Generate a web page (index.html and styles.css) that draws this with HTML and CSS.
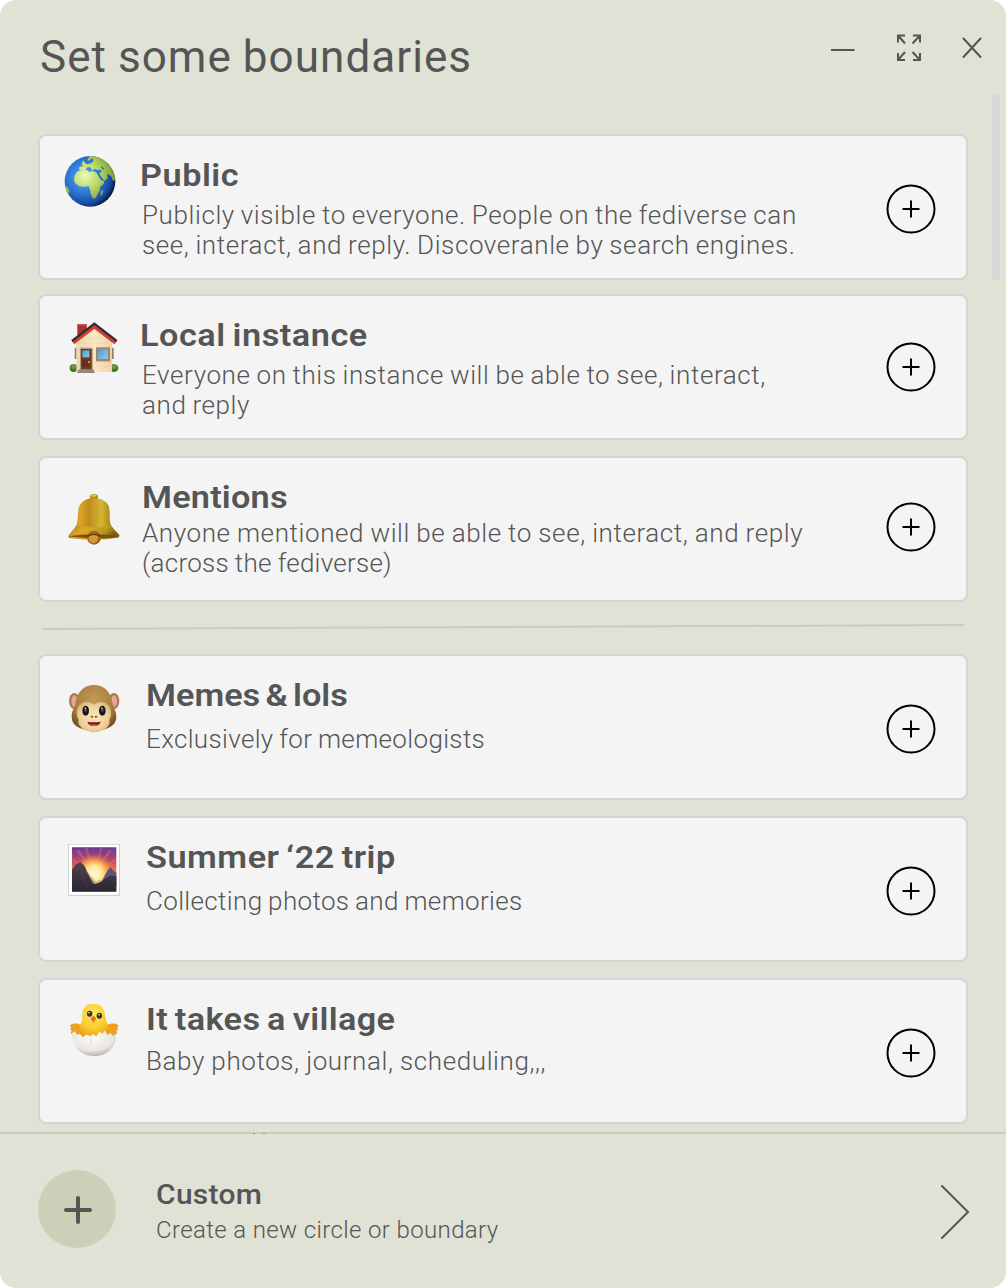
FILE: index.html
```html
<!DOCTYPE html>
<html lang="en">
<head>
<meta charset="utf-8">
<title>Set some boundaries</title>
<link rel="stylesheet" href="styles.css">
</head>
<body>
<svg class="defs" width="0" height="0" aria-hidden="true">
  <symbol id="add" viewBox="0 0 50 50"><circle cx="25" cy="25" r="23.5"/><path d="M25 16.5v17M16.5 25h17"/></symbol>
</svg>
<main class="window">
  <header class="header">
    <h1 class="title">Set some boundaries</h1>
    <div class="controls">
      <svg width="24" height="28" viewBox="0 0 24 28"><path d="M0 16h23.5"/></svg>
      <svg width="26" height="28" viewBox="0 0 26 28"><path d="M9 1.500H2v7M2 1.500l7 8M17 1.500h7v7M24 1.500l-7.500 8M2 19v7h7M2 26l7-8M24 19v7h-7M24 26l-7.500-8"/></svg>
      <svg width="20" height="28" viewBox="0 0 20 28"><path d="M1.500 4.500l17 18.500M18.500 4.500l-17 18.500" stroke-linecap="round"/></svg>
    </div>
  </header>
  <div class="scrollbar"></div>
  <section class="list">
    <article class="card card-public">
      <svg class="emoji" viewBox="102 93 156 156">
        <defs>
          <radialGradient id="sea" cx=".38" cy=".42" r=".64"><stop offset="0" stop-color="#62aef2"/><stop offset=".5" stop-color="#2e77d6"/><stop offset=".82" stop-color="#174ba4"/><stop offset="1" stop-color="#061a3c"/></radialGradient>
          <radialGradient id="land" gradientUnits="userSpaceOnUse" cx="165" cy="152" r="95"><stop offset="0" stop-color="#ecfbb4"/><stop offset=".45" stop-color="#b9d869"/><stop offset="1" stop-color="#6d922c"/></radialGradient>
          <clipPath id="globe"><circle cx="180" cy="169" r="76"/></clipPath>
        </defs>
        <circle cx="180" cy="169" r="76" fill="url(#sea)"/>
        <g fill="url(#land)" clip-path="url(#globe)">
          <path d="M133 153l8-12 10-5 20-1 6 5 14-1 10 5 7 13 6 9 9 2-2 8-11 11-1 10-6 10-6 12-8 2-6-12-3-15-4-11-13 2-14-1-12-8-5-9z"/>
          <path d="M148 135l0-10 11-2-5-7 10-4 6 6 13-3 7-8-4-7-9 7-5-2 7-12 11-4 15 2 20 9 18 18 13 24 3 22-10 4-6-15-8-5-5 2 4 9-10 8-9-8-7-14 7-6-2-5-10 1-9-4-4 3-3 4-4-9-5-3-8 2-4 7z"/>
          <path d="M157 108l5-1 1 10-6 3zM213 199l7-5-3 13-6 6zM103 181l9 4 7 14-6 12-8-9z"/>
        </g>
        <path d="M202 143l15 22M214 125l8 9" stroke="#246bb5" stroke-width="4"/>
      </svg>
      <div class="text"><h2>Public</h2><p>Publicly visible to everyone. People on the fediverse can<br>see, interact, and reply. Discoveranle by search engines.</p></div>
      <svg class="add"><use href="#add"/></svg>
    </article>
    <article class="card card-local">
      <svg class="emoji" viewBox="54 36 156 156">
        <defs>
          <linearGradient id="wall"><stop offset="0" stop-color="#eed6ac"/><stop offset=".5" stop-color="#fbe7c3"/><stop offset="1" stop-color="#efd4a7"/></linearGradient>
          <linearGradient id="glass" x2="1" y2="1"><stop offset="0" stop-color="#4d9fd7"/><stop offset="1" stop-color="#94c7e9"/></linearGradient>
          <radialGradient id="bush" cy=".3"><stop offset="0" stop-color="#7eaa42"/><stop offset="1" stop-color="#3e721e"/></radialGradient>
        </defs>
        <path d="M82 42h28v34l-28 18z" fill="#aa302b"/><path d="M82 42h28v5H82z" fill="#ca5048"/>
        <path d="M74 113h6v34h-6zM185 113h6v34h-6z" fill="#8c8174"/>
        <ellipse cx="71" cy="174" rx="12" ry="12" fill="url(#bush)"/><ellipse cx="192" cy="174" rx="13" ry="12" fill="url(#bush)"/>
        <path d="M79 94l54-42 53 42v92H79z" fill="url(#wall)"/>
        <path d="M80 121h106M80 133h106M80 145h106M80 157h106M80 169h106M92 99h82M106 85h52" stroke="#dfc59a" stroke-width="1"/>
        <path d="M69 98l64-49 64 49" fill="none" stroke="#d33b35" stroke-width="12"/>
        <path d="M66 93l67-52 67 52" fill="none" stroke="#2f3033" stroke-width="7"/>
        <path d="M90 113h38v67H90z" fill="#b29a7d"/><path d="M93 117h32v62H93z" fill="#74381f"/>
        <path d="M97 121h21v21H97z" fill="url(#glass)"/><path d="M98 150h7v21h-7zM109 150h7v21h-7z" fill="#602b18"/><circle cx="117" cy="156" r="3" fill="#eab24b"/>
        <path d="M138 112h42v42h-42z" fill="#a08569"/><path d="M143 118h31v29h-31z" fill="url(#glass)"/>
        <path d="M87 178h43l5 11H81z" fill="#928880"/>
      </svg>
      <div class="text"><h2>Local instance</h2><p>Everyone on this instance will be able to see, interact,<br>and reply</p></div>
      <svg class="add"><use href="#add"/></svg>
    </article>
    <article class="card card-mentions">
      <svg class="emoji" viewBox="54 42 156 156">
        <defs>
          <linearGradient id="brass"><stop offset="0" stop-color="#8b5b0c"/><stop offset=".22" stop-color="#dea426"/><stop offset=".4" stop-color="#c08c1a"/><stop offset=".65" stop-color="#d3b733"/><stop offset=".83" stop-color="#a98416"/><stop offset="1" stop-color="#79500c"/></linearGradient>
          <linearGradient id="brassRim" x2="1" y2=".3"><stop offset="0" stop-color="#ba8111"/><stop offset=".35" stop-color="#e0a62b"/><stop offset=".75" stop-color="#bc9c22"/><stop offset="1" stop-color="#7c5b12"/></linearGradient>
        </defs>
        <rect x="120" y="43" width="24" height="20" rx="8" fill="#b8891e"/><ellipse cx="131" cy="47" rx="8" ry="3" fill="#e7c84d"/>
        <path d="M55 168c8-13 20-21 26-36 5-19-1-49 13-63 10-11 24-14 38-14s29 4 39 15c13 15 5 42 10 60 5 16 19 24 28 37q-2 5-7 6-70 12-142 1-5-1-5-6z" fill="url(#brass)"/>
        <path d="M56 167c8-12 17-18 24-31q52 13 101 0 13 20 27 31-7 5-18 6-59 9-120 0-10-1-14-6z" fill="url(#brassRim)"/>
        <path d="M61 168q70-10 142 0-13 5-71 6-62-1-71-6z" fill="#765009"/>
        <circle cx="132" cy="173" r="21" fill="#9d6914"/><circle cx="130" cy="175" r="14" fill="#d49839"/><path d="M112 169q20-12 40 0" stroke="#5d3a08" stroke-width="4" fill="none"/>
      </svg>
      <div class="text"><h2>Mentions</h2><p>Anyone mentioned will be able to see, interact, and reply<br><span class="across">(across the fediverse)</span></p></div>
      <svg class="add"><use href="#add"/></svg>
    </article>
    <svg class="divider" viewBox="0 0 930 52"><path d="M4 27l922-4"/></svg>
    <article class="card card-memes">
      <svg class="emoji" viewBox="54 39 156 156">
        <defs>
          <radialGradient id="fur" cx=".5" cy=".3" r=".65"><stop offset="0" stop-color="#c39a59"/><stop offset=".7" stop-color="#a77c40"/><stop offset="1" stop-color="#795426"/></radialGradient>
          <radialGradient id="face" cx=".5" cy=".5" r=".6"><stop offset="0" stop-color="#fbe6bb"/><stop offset=".7" stop-color="#edcf96"/><stop offset="1" stop-color="#cfaa69"/></radialGradient>
        </defs>
        <ellipse cx="73" cy="93" rx="16" ry="24" fill="#a97f46"/><ellipse cx="192" cy="93" rx="16" ry="24" fill="#a97f46"/>
        <ellipse cx="73" cy="93" rx="9" ry="17" fill="#e9a3a0"/><ellipse cx="192" cy="93" rx="9" ry="17" fill="#e9a3a0"/>
        <path d="M132 45c31 0 51 22 55 52 2 17 12 24 12 43 0 28-27 37-46 39q-12 7-21 8-9-1-21-8c-20-2-46-11-46-39 0-19 10-26 12-43 4-30 24-52 55-52z" fill="url(#fur)"/>
        <path d="M132 105c12-13 32-12 42-1 12 13 11 34 4 45 5 18-14 32-30 35q-16 5-32 0c-16-4-35-17-30-35-8-13-8-34 4-46 11-10 30-11 42 2z" fill="url(#face)"/>
        <ellipse cx="107" cy="122" rx="10" ry="15" fill="#171717"/><ellipse cx="157" cy="122" rx="10" ry="15" fill="#171717"/>
        <ellipse cx="107" cy="121" rx="4" ry="5" fill="#4b4d4f"/><ellipse cx="157" cy="121" rx="4" ry="5" fill="#4b4d4f"/><circle cx="106" cy="115" r="2.500" fill="#fff"/><circle cx="156" cy="115" r="2.500" fill="#fff"/>
        <ellipse cx="126" cy="140" rx="4" ry="3" fill="#80562d"/><ellipse cx="138" cy="140" rx="4" ry="3" fill="#80562d"/>
        <path d="M112 155q20 4 40 0-4 13-20 13t-20-13z" fill="#7c1826"/><path d="M120 164q12-3 24 0-5 4-12 4t-12-4z" fill="#df5267"/>
      </svg>
      <div class="text"><h2>Memes &amp; lols</h2><p>Exclusively for memeologists</p></div>
      <svg class="add"><use href="#add"/></svg>
    </article>
    <article class="card card-trip">
      <svg class="emoji" viewBox="54 42 156 156">
        <defs>
          <linearGradient id="sky" x2="0" y2="1"><stop offset="0" stop-color="#653b91"/><stop offset=".28" stop-color="#b84372"/><stop offset=".5" stop-color="#ef7240"/><stop offset="1" stop-color="#fbbd58"/></linearGradient>
          <radialGradient id="sun" gradientUnits="userSpaceOnUse" cx="132" cy="132" r="62"><stop offset="0" stop-color="#fffbd4"/><stop offset=".4" stop-color="#ffe99a"/><stop offset=".65" stop-color="#ffb24a" stop-opacity=".85"/><stop offset="1" stop-color="#f6733c" stop-opacity="0"/></radialGradient>
          <linearGradient id="rock" x2="0" y2="1"><stop offset="0" stop-color="#55424c"/><stop offset="1" stop-color="#282633"/></linearGradient>
        </defs>
        <path d="M54 42h156v156H54z" fill="#c8d2d4"/><path d="M57 44h150v150H57z" fill="#fff"/>
        <path d="M66 52h133v133H66z" fill="url(#sky)"/>
        <path d="M132 132L78 62l10-2zM132 132L105 53l8 0zM132 132l19-79 7 0zM132 132l45-73 9 3zM132 132L67 91v-8zM132 132l66-48v8z" fill="#ff9a58" opacity=".28"/>
        <path d="M66 65h133v120H66z" fill="url(#sun)"/>
        <path d="M158 148l9-17 6-10 8-10 10 11 8 6v40h-41z" fill="#57577a"/>
        <path d="M66 119l12-16 13-7 12 11 8 17 13 23 10 14 16-4 16-12 15-8 18 2v46H66z" fill="url(#rock)"/>
        <path d="M105 118l17 19 16 17 18-6 12-10-14 17-14 7-12-1z" fill="#b79878" opacity=".55"/><path d="M78 127l10-20 9 30 18 40" fill="none" stroke="#655258" stroke-width="3" opacity=".3"/>
      </svg>
      <div class="text"><h2>Summer ‘22 trip</h2><p>Collecting photos and memories</p></div>
      <svg class="add"><use href="#add"/></svg>
    </article>
    <article class="card card-village">
      <svg class="emoji" viewBox="54 42 156 156">
        <defs>
          <radialGradient id="chick" cx=".5" cy=".3" r=".75"><stop offset="0" stop-color="#ffe661"/><stop offset=".6" stop-color="#fbcb2e"/><stop offset="1" stop-color="#e99a15"/></radialGradient>
          <radialGradient id="shell" cx=".45" cy=".3" r=".75"><stop offset="0" stop-color="#fcfbf8"/><stop offset=".65" stop-color="#e9e6df"/><stop offset="1" stop-color="#aaa69d"/></radialGradient>
        </defs>
        <path d="M68 127l5-10 116 0 6 12-8 20H76z" fill="#b8985d"/>
        <path d="M96 107c-14-9-28-7-36-1q3 4 3 8l-3 5 5 2-3 10 34 5zM168 107c14-9 29-7 38-1q-4 4-4 8l3 5-6 2 3 10-34 5z" fill="#eea01e"/>
        <path d="M97 74c1-23 15-34 32-33 22 0 32 12 36 32 1 12 3 19 7 27 5 18 5 29 0 43H90c-5-16-5-28 3-43 4-8 4-16 4-26z" fill="url(#chick)"/>
        <ellipse cx="119" cy="71" rx="8" ry="9" fill="#30332e"/><ellipse cx="148" cy="77" rx="8" ry="9" fill="#30332e"/><circle cx="117" cy="68" r="2.500" fill="#d9e0dc"/><circle cx="147" cy="74" r="2.500" fill="#d9e0dc"/>
        <path d="M123 84l7-7 8 6-3 10-6 5-5-8z" fill="#ec791b"/><path d="M124 86l12 0" stroke="#bc540e" stroke-width="1.500"/>
        <path d="M66 130l8-7 7 11 8-3 11 11 8-9 12 6 9-7 10 7 9-14 10 6 6-10 9 13 8-5 10 9 7-7c3 36-24 67-65 67-42 0-69-30-67-68z" fill="url(#shell)"/>
        <path d="M129 133l-9 17 5 4-7 13" stroke="#d4d0c7" stroke-width="2" fill="none"/>
      </svg>
      <div class="text"><h2>It takes a village</h2><p>Baby photos, journal, scheduling,,,</p></div>
      <svg class="add"><use href="#add"/></svg>
    </article>
  </section>
  <footer class="footer">
    <svg class="new" viewBox="0 0 78 78"><circle cx="39" cy="39" r="39"/><path d="M28 40h24M40 28v24"/></svg>
    <div class="custom"><h2>Custom</h2><p>Create a new circle or boundary</p></div>
    <svg class="chevron" viewBox="0 0 30 56"><path d="M2 2l26 26L2 54"/></svg>
  </footer>
</main>
</body>
</html>
```
FILE: styles.css
```css
* { box-sizing: border-box; }
body { margin: 0; background: #fff; font-family: Roboto, "Liberation Sans", sans-serif; color: #555; }
h1, h2, p { margin: 0; white-space: nowrap; }
svg { display: block; flex: none; }
.defs { position: absolute; }
.window { position: relative; display: flex; flex-direction: column; width: 1006px; height: 1288px; overflow: hidden; border-radius: 16px; background: #e0e2d5; }
.header { display: flex; justify-content: space-between; height: 134px; padding: 34px 24px 0 40px; }
.title { font-size: 44px; font-weight: 400; line-height: 46px; letter-spacing: 1.05px; word-spacing: -1px; }
.controls { display: flex; gap: 40px; }
.controls svg { fill: none; stroke: #555; stroke-width: 2; }
.controls svg:first-child { margin-right: 1px; }
.scrollbar { position: absolute; top: 94px; left: 992px; width: 8px; height: 186px; background: #d8d8d8; }
.list { display: flex; flex-direction: column; height: 998px; padding: 0 38px; }
.card { display: flex; flex: none; height: 146px; margin-bottom: 16px; padding: 0 30px 0 28px; border: 2px solid #d5d5d5; border-radius: 8px; background: #f4f4f4; }
.emoji { width: 52px; height: 52px; }
.text { flex: 1; padding: 20px 0 0 26px; }
h2 { font-size: 32px; font-weight: 600; line-height: 38px; letter-spacing: .5px; word-spacing: -2px; transform: scaleX(1.07); transform-origin: left; }
.text p { margin-top: 10px; font-size: 26px; font-weight: 300; line-height: 30px; letter-spacing: .6px; word-spacing: -1px; }
.add { width: 50px; height: 50px; margin-top: 48px; fill: none; stroke: #000; stroke-width: 2; }
.divider { width: 930px; height: 52px; stroke: #c9cdbd; stroke-width: 2; }
.card-public { margin-bottom: 14px; padding-left: 24px; }
.card-public .emoji { margin-top: 20px; }
.card-public .text { padding-left: 24px; }
.card-public p, .card-local p { margin-top: 6px; padding-left: 2px; }
.card-local .emoji { margin-top: 26px; }
.card-local .text { padding-left: 20px; }
.card-local .add { margin-top: 46px; }
.card-mentions { margin-bottom: 0; }
.card-mentions .emoji { margin-top: 36px; }
.card-mentions .text { padding-left: 22px; }
.card-mentions h2 { letter-spacing: .2px; }
.card-mentions p { margin-top: 2px; word-spacing: -.6px; }
.across { letter-spacing: .25px; }
.card-mentions .add { margin-top: 44px; }
.card-memes .emoji { margin-top: 27px; }
.card-memes h2 { letter-spacing: 0; word-spacing: -3px; }
.card-memes p, .card-trip p { letter-spacing: .35px; }
.card-trip .emoji { margin-top: 26px; }
.card-village .emoji { margin-top: 24px; }
.card-village h2 { letter-spacing: .35px; }
.card-village p { margin-top: 8px; word-spacing: -.5px; }
.footer { position: relative; display: flex; height: 156px; padding: 0 36px 0 38px; border-top: 2px solid #c9cdbd; }
.footer::before { content: ""; position: absolute; top: -1px; left: 253px; width: 8px; height: 1px; border: solid #92948c; border-width: 0 2px; }
.new { width: 78px; height: 78px; margin-top: 36px; fill: #cdd0b9; }
.new path { stroke: #555; stroke-width: 4; stroke-linecap: round; }
.custom { flex: 1; padding: 44px 0 0 40px; }
.custom h2 { font-size: 28px; font-weight: 500; line-height: 34px; letter-spacing: .3px; }
.custom p { margin-top: 3px; font-size: 24px; font-weight: 300; line-height: 30px; letter-spacing: .37px; }
.chevron { width: 30px; height: 56px; margin-top: 50px; fill: none; stroke: #555; stroke-width: 2; stroke-linecap: round; }
```
